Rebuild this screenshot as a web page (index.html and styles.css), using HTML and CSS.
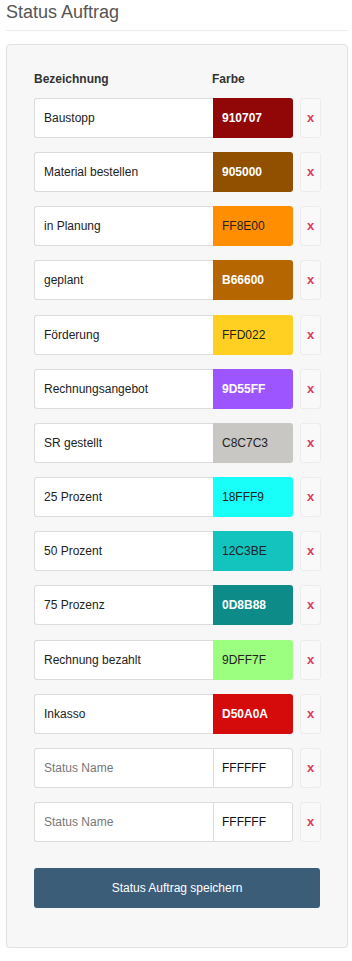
FILE: index.html
```html
<!DOCTYPE html>
<html lang="de">
<head>
<meta charset="utf-8">
<title>Status Auftrag</title>
<link rel="stylesheet" href="styles.css">
</head>
<body>
<h2 class="page-title">Status Auftrag</h2>
<div class="card">
  <div class="head-row">
    <span class="head-name">Bezeichnung</span>
    <span class="head-color">Farbe</span>
  </div>
  <div class="rows">
    <div class="row"><div class="name">Baustopp</div><div class="color light" style="background:#910707">910707</div><div class="del">x</div></div>
    <div class="row"><div class="name">Material bestellen</div><div class="color light" style="background:#905000">905000</div><div class="del">x</div></div>
    <div class="row"><div class="name">in Planung</div><div class="color dark" style="background:#FF8E00">FF8E00</div><div class="del">x</div></div>
    <div class="row"><div class="name">geplant</div><div class="color light" style="background:#B66600">B66600</div><div class="del">x</div></div>
    <div class="row"><div class="name">Förderung</div><div class="color dark" style="background:#FFD022">FFD022</div><div class="del">x</div></div>
    <div class="row"><div class="name">Rechnungsangebot</div><div class="color light" style="background:#9D55FF">9D55FF</div><div class="del">x</div></div>
    <div class="row"><div class="name">SR gestellt</div><div class="color dark" style="background:#C8C7C3">C8C7C3</div><div class="del">x</div></div>
    <div class="row"><div class="name">25 Prozent</div><div class="color dark" style="background:#18FFF9">18FFF9</div><div class="del">x</div></div>
    <div class="row"><div class="name">50 Prozent</div><div class="color dark" style="background:#12C3BE">12C3BE</div><div class="del">x</div></div>
    <div class="row"><div class="name">75 Prozenz</div><div class="color light" style="background:#0D8B88">0D8B88</div><div class="del">x</div></div>
    <div class="row"><div class="name">Rechnung bezahlt</div><div class="color dark" style="background:#9DFF7F">9DFF7F</div><div class="del">x</div></div>
    <div class="row"><div class="name">Inkasso</div><div class="color light" style="background:#D50A0A">D50A0A</div><div class="del">x</div></div>
    <div class="row"><div class="name placeholder">Status Name</div><div class="color empty">FFFFFF</div><div class="del">x</div></div>
    <div class="row"><div class="name placeholder">Status Name</div><div class="color empty">FFFFFF</div><div class="del">x</div></div>
  </div>
  <button class="save">Status Auftrag speichern</button>
</div>
</body>
</html>
```
FILE: styles.css
```css
* { box-sizing: border-box; }
html, body { margin: 0; padding: 0; background: #fff; }
body {
  font-family: "Liberation Sans", Arial, sans-serif;
  font-size: 12px;
  color: #222;
  padding: 0 4px 0 6px;
}
.page-title {
  margin: 0;
  font-weight: normal;
  font-size: 18px;
  line-height: 24px;
  color: #555;
  padding: 0 0 6px 0;
  border-bottom: 1px solid #ececec;
}
.card {
  margin-top: 13px;
  background: #f7f7f7;
  border: 1px solid #e2e2e2;
  border-radius: 4px;
  box-shadow: 0 1px 2px rgba(0,0,0,0.06);
  padding: 26px 26px 39px 27px;
}
.head-row {
  display: flex;
  font-weight: bold;
  line-height: 17px;
  color: #333;
  margin-bottom: 10px;
}
.head-name { width: 178px; }
.rows {
  display: flex;
  flex-direction: column;
  gap: 14.17px;
}
.row {
  display: flex;
  height: 40px;
}
.name {
  flex: 1;
  background: #fff;
  border: 1px solid #dcdcdc;
  border-right: none;
  border-radius: 3px 0 0 3px;
  padding-left: 9px;
  display: flex;
  align-items: center;
  color: #222;
}
.name.placeholder { color: #777; }
.color {
  width: 80px;
  border-radius: 0 3px 3px 0;
  padding-left: 9px;
  display: flex;
  align-items: center;
}
.color.light { color: #fff; font-weight: bold; }
.color.dark { color: #222; }
.color.empty {
  background: #fff;
  border: 1px solid #dcdcdc;
  color: #111;
  padding-left: 8px;
}
.del {
  width: 21px;
  margin-left: 7px;
  background: #f9f9f9;
  border: 1px solid #ececec;
  border-radius: 3px;
  display: flex;
  align-items: center;
  justify-content: center;
  color: #dc3d5c;
  font-weight: bold;
  font-size: 13px;
  padding-bottom: 1px;
}
.save {
  display: block;
  width: 286px;
  height: 40px;
  margin-top: 26px;
  background: #3c5d77;
  color: #fff;
  border: none;
  border-radius: 3px;
  font-family: "Liberation Sans", Arial, sans-serif;
  font-size: 12px;
}
```
